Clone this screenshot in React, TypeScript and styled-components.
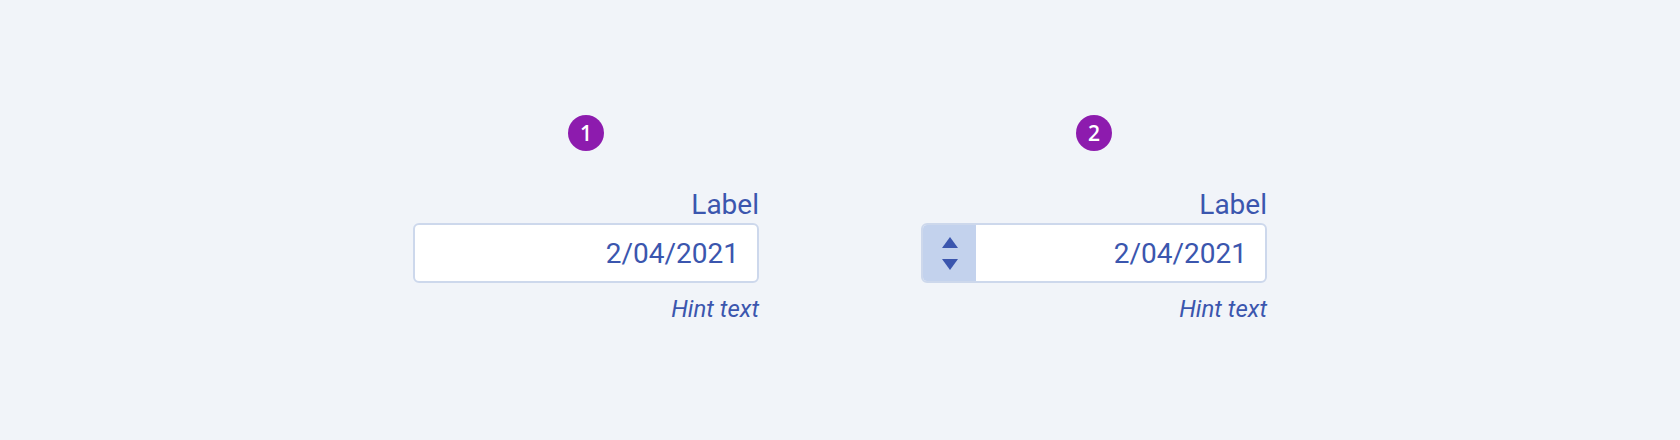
import React from 'react';
import styled, { createGlobalStyle } from 'styled-components';

const TEXT_BLUE = '#3b56ae';
const BORDER = '#cdd8ec';
const STEPPER_BG = '#c3d2ed';
const BADGE = '#8d1bae';
const PAGE_BG = '#f1f4f9';

const GlobalStyle = createGlobalStyle`
  html, body {
    margin: 0;
    padding: 0;
    background: ${PAGE_BG};
  }
  body {
    font-family: Roboto, 'Liberation Sans', sans-serif;
  }
`;

type DateFieldProps = {
  step: number;
  label: string;
  value: string;
  hint: string;
  withStepper?: boolean;
};

function DateField({ step, label, value, hint, withStepper }: DateFieldProps) {
  return (
    <Column>
      <Badge>{step}</Badge>
      <Label>{label}</Label>
      <Field>
        {withStepper && (
          <Stepper>
            <Arrow viewBox="0 0 16 11" aria-hidden>
              <path d="M8 0 L16 11 L0 11 Z" />
            </Arrow>
            <Arrow viewBox="0 0 16 11" aria-hidden>
              <path d="M0 0 L16 0 L8 11 Z" />
            </Arrow>
          </Stepper>
        )}
        <Value>{value}</Value>
      </Field>
      <Hint>{hint}</Hint>
    </Column>
  );
}

export default function App() {
  return (
    <>
      <GlobalStyle />
      <Page>
        <DateField step={1} label="Label" value="2/04/2021" hint="Hint text" />
        <DateField
          step={2}
          label="Label"
          value="2/04/2021"
          hint="Hint text"
          withStepper
        />
      </Page>
    </>
  );
}

const Page = styled.main`
  box-sizing: border-box;
  height: 440px;
  display: flex;
  justify-content: center;
  align-items: flex-start;
  gap: 162px;
  padding-top: 115px;
`;

const Column = styled.div`
  width: 346px;
  display: flex;
  flex-direction: column;
  align-items: flex-end;
`;

const Badge = styled.div`
  align-self: center;
  width: 36px;
  height: 36px;
  border-radius: 50%;
  background: ${BADGE};
  color: #fff;
  display: flex;
  align-items: center;
  justify-content: center;
  font-family: 'Open Sans', Roboto, sans-serif;
  font-size: 21px;
  font-weight: 600;
  line-height: 1;
  margin-bottom: 38px;
`;

const Label = styled.div`
  color: ${TEXT_BLUE};
  font-size: 28px;
  line-height: 32px;
  margin-bottom: 2px;
`;

const Field = styled.div`
  box-sizing: border-box;
  width: 100%;
  height: 60px;
  display: flex;
  align-items: stretch;
  background: #fff;
  border: 2px solid ${BORDER};
  border-radius: 6px;
  overflow: hidden;
`;

const Stepper = styled.div`
  width: 53px;
  flex: none;
  background: ${STEPPER_BG};
  display: flex;
  flex-direction: column;
  align-items: center;
  justify-content: center;
  gap: 11px;
  padding-top: 1px;
`;

const Arrow = styled.svg`
  width: 16px;
  height: 11px;
  fill: ${TEXT_BLUE};
`;

const Value = styled.div`
  flex: 1;
  display: flex;
  align-items: center;
  justify-content: flex-end;
  padding: 2px 18px 0 0;
  color: ${TEXT_BLUE};
  font-size: 28px;
  line-height: 32px;
`;

const Hint = styled.div`
  margin-top: 12px;
  color: ${TEXT_BLUE};
  font-size: 24px;
  font-style: italic;
  line-height: 28px;
`;
